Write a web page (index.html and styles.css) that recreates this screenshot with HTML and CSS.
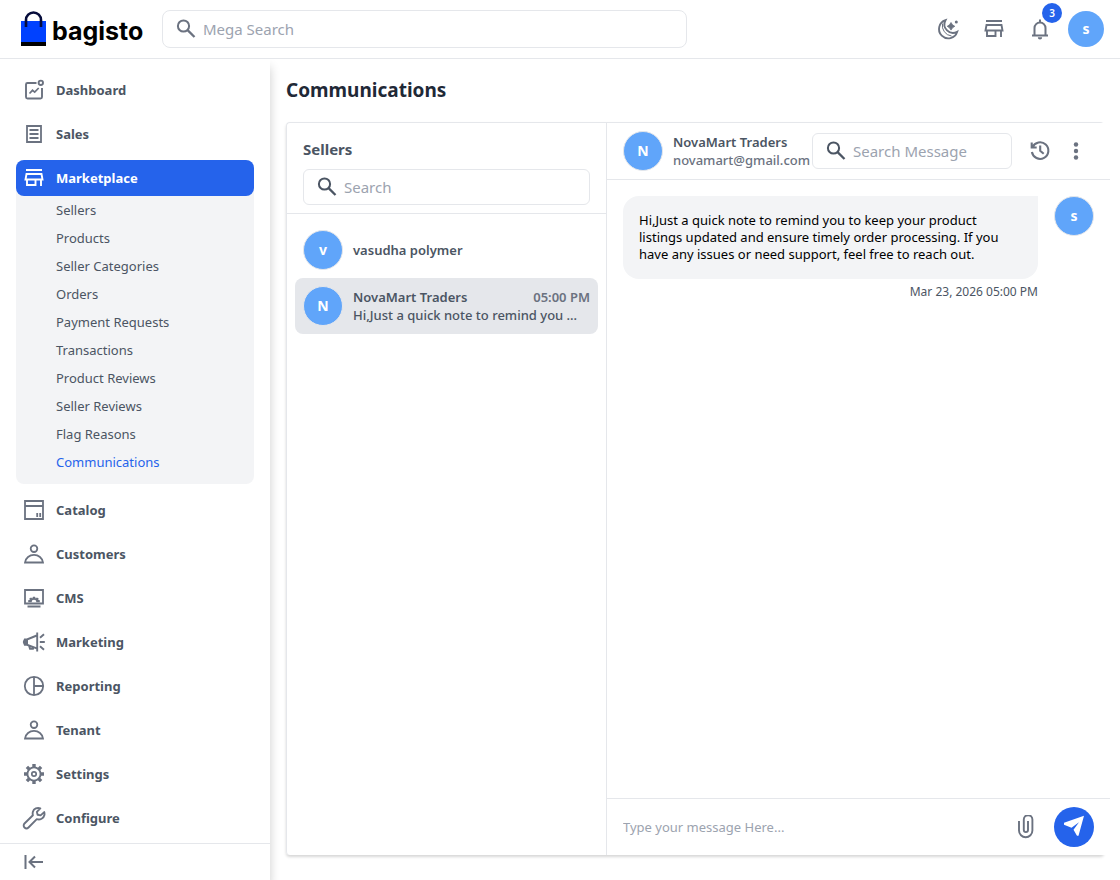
FILE: index.html
```html
<!DOCTYPE html>
<html lang="en">
<head>
<meta charset="utf-8">
<meta name="viewport" content="width=device-width, initial-scale=1">
<title>Communications</title>
<link rel="stylesheet" href="styles.css">
</head>
<body>
<svg class="sprite" aria-hidden="true">
  <symbol id="i-search" viewBox="0 0 24 24"><g fill="none" stroke="currentColor" stroke-width="2"><circle cx="9.500" cy="9" r="5.600"/><path d="M13.600 13.100 20.500 20" stroke-width="2.300"/></g></symbol>
  <symbol id="i-store" viewBox="0 0 24 24"><g fill="none" stroke="currentColor" stroke-width="1.900"><path d="M4 4h16M4.500 8h15l1 5.500h-17zM5 13.500V19h8.500v-5.500M19 13.500V20"/></g></symbol>
  <symbol id="i-person" viewBox="0 0 24 24"><g fill="none" stroke="currentColor" stroke-width="1.800"><circle cx="12" cy="6.700" r="3.300"/><path d="M3 20.500c.6-4.600 4.500-7.600 9-7.600s8.400 3 9 7.600z"/></g></symbol>
</svg>
<header class="topbar">
  <a class="logo" href="#" aria-label="bagisto">
    <svg width="26" height="36" viewBox="0 0 26 36" aria-hidden="true"><path fill="#0041ff" d="M1 10h25v21H1z"/><path fill="#000" d="M1 31h25v4H1z"/><path d="M6 16V9a7.500 7.500 0 0 1 15 0v7" fill="none" stroke="#060c3b" stroke-width="2.600"/></svg>
    <span class="logo-text">bagisto</span>
  </a>
  <label class="field mega"><svg class="icon"><use href="#i-search"/></svg><input type="text" placeholder="Mega Search" aria-label="Mega Search"></label>
  <div class="top-actions">
    <button aria-label="Dark mode"><svg class="icon" viewBox="0 0 24 24"><g fill="none" stroke="currentColor" stroke-width="1.900"><path d="M9.500 3.200A9.300 9.300 0 1 0 21.200 14.800 8.600 8.600 0 0 1 9.500 3.200z"/><path d="M6.500 6.500a10.500 10.500 0 0 0 9 12.500" stroke-width="1"/></g><path fill="currentColor" d="m15 5.500 1.500 2.300 2.300 1.500-2.300 1.500-1.500 2.300-1.500-2.300-2.300-1.500 2.300-1.500z" stroke="currentColor" stroke-width=".8"/><circle cx="20.300" cy="5" r="1.500" fill="currentColor"/></svg></button>
    <button aria-label="Visit shop"><svg class="icon"><use href="#i-store"/></svg></button>
    <button class="bell" aria-label="Notifications"><svg class="icon" viewBox="0 0 24 24"><path d="M6.500 18.200V11a5.500 5.500 0 0 1 11 0v7.200M4 18.500h16M12 2.500v3" fill="none" stroke="currentColor" stroke-width="2"/><path fill="currentColor" d="M9.800 20.200h4.400a2.200 2.200 0 0 1-4.400 0z"/></svg><span class="badge">3</span></button>
    <button class="avatar avatar-top">s</button>
  </div>
</header>
<div class="shell">
  <aside class="sidebar">
    <nav class="menu">
      <a class="item" href="#"><svg class="icon" viewBox="0 0 24 24"><g fill="none" stroke="currentColor" stroke-width="1.900"><path d="M14.500 5H5.500a1.500 1.500 0 0 0-1.500 1.500v12.500a1.500 1.500 0 0 0 1.500 1.500H18.500a1.500 1.500 0 0 0 1.500-1.500V10"/><path d="m7.500 15.500 3-3.200 2.200 1.900 4-4.200" stroke-width="1.700"/><circle cx="18.800" cy="4.800" r="2.200"/></g></svg>Dashboard</a>
      <a class="item" href="#"><svg class="icon" viewBox="0 0 24 24"><path d="M5 4h14v16H5zM7.500 8h9M7.500 12h9M7.500 16h9" fill="none" stroke="currentColor" stroke-width="1.800"/></svg>Sales</a>
      <div class="group">
        <a class="item active" href="#"><svg class="icon"><use href="#i-store"/></svg>Marketplace</a>
        <div class="submenu">
          <a href="#">Sellers</a><a href="#">Products</a><a href="#">Seller Categories</a><a href="#">Orders</a><a href="#">Payment Requests</a><a href="#">Transactions</a><a href="#">Product Reviews</a><a href="#">Seller Reviews</a><a href="#">Flag Reasons</a><a class="current" href="#">Communications</a>
        </div>
      </div>
      <a class="item" href="#"><svg class="icon" viewBox="0 0 24 24"><path d="M3 3h18v18H3zM3 8h18M15.200 15v4M18.200 15v4" fill="none" stroke="currentColor" stroke-width="1.800"/></svg>Catalog</a>
      <a class="item" href="#"><svg class="icon"><use href="#i-person"/></svg>Customers</a>
      <a class="item" href="#"><svg class="icon" viewBox="0 0 24 24"><path d="M3 4h18v13.500H3zM5.500 20.500h13" fill="none" stroke="currentColor" stroke-width="1.800"/><path fill="currentColor" d="M6.200 16.200v-2l1.600-.4-.4-1.500 1.800-.9 1 1 .8-1.700h2l.8 1.700 1-1 1.800.9-.4 1.500 1.600.4v2h-3.400a2.400 2.400 0 0 0-4.800 0z"/></svg>CMS</a>
      <a class="item" href="#"><svg class="icon" viewBox="0 0 24 24"><g fill="none" stroke="currentColor" stroke-width="1.900"><path d="M15.200 2.500v19M14.800 5.500 5 9.500H2.800L1.800 12l1 2.800H5l9.800 3.500M7 15.500l1 3.200h3l.6-1.800M17.800 12h5M18 7.800l4-3.500M18 16.200l4 3.500"/></g><path fill="currentColor" d="M2.500 9H6v6H2.500L1 12z"/></svg>Marketing</a>
      <a class="item" href="#"><svg class="icon" viewBox="0 0 24 24"><path d="M12 2.800a9.200 9.200 0 1 0 0 18.400 9.200 9.200 0 0 0 0-18.400zM12 3v18M12 12h9" fill="none" stroke="currentColor" stroke-width="1.800"/></svg>Reporting</a>
      <a class="item" href="#"><svg class="icon"><use href="#i-person"/></svg>Tenant</a>
      <a class="item" href="#"><svg class="icon" viewBox="0 0 24 24"><g fill="none" stroke="currentColor"><circle cx="12" cy="12" r="6.600" stroke-width="1.900"/><circle cx="12" cy="12" r="2.200" stroke-width="1.700"/><path stroke-width="3.400" d="M12 2v3.500M12 18.500V22M2 12h3.500M18.500 12H22M4.900 4.900l2.500 2.500M16.600 16.600l2.500 2.500M4.900 19.100l2.500-2.500M16.600 7.400l2.500-2.500"/></g></svg>Settings</a>
      <a class="item" href="#"><svg class="icon" viewBox="0 0 24 24"><path d="M18.300 2.400c-3-1.200-6.500.3-7.400 3.400-.4 1.300-.3 2.400 0 3.500L2.500 17.500a2.800 2.800 0 0 0 4 4L14.800 13.200c3.400 1 6.900-.8 7.600-4.200.2-1 .1-2-.2-2.900l-3.600 3.300-3-.6-.7-3z" fill="none" stroke="currentColor" stroke-width="1.900" stroke-linejoin="round"/></svg>Configure</a>
    </nav>
    <button class="collapse" aria-label="Collapse menu"><svg class="icon" viewBox="0 0 24 24"><path d="M3.500 5v14M21 12H8M13 6.500 7.500 12l5.500 5.500" fill="none" stroke="currentColor" stroke-width="2"/></svg></button>
  </aside>
  <main class="main">
    <h1>Communications</h1>
    <div class="panel">
      <section class="sellers">
        <div class="sellers-head">
          <h2>Sellers</h2>
          <label class="field dark"><svg class="icon"><use href="#i-search"/></svg><input type="text" placeholder="Search" aria-label="Search sellers"></label>
        </div>
        <div class="seller-list">
          <a class="seller" href="#"><span class="avatar">v</span><span class="seller-info"><span class="name">vasudha polymer</span></span></a>
          <a class="seller selected" href="#"><span class="avatar">N</span><span class="seller-info"><span class="row"><span class="name">NovaMart Traders</span><span class="time">05:00 PM</span></span><span class="preview">Hi,Just a quick note to remind you …</span></span></a>
        </div>
      </section>
      <section class="chat">
        <div class="chat-head">
          <span class="avatar">N</span>
          <div class="contact"><span class="name">NovaMart Traders</span><span class="email">novamart@gmail.com</span></div>
          <label class="field dark message-search"><svg class="icon"><use href="#i-search"/></svg><input type="text" placeholder="Search Message" aria-label="Search Message"></label>
          <div class="chat-tools">
            <button aria-label="History"><svg class="icon" viewBox="0 0 24 24"><path d="M3.700 3.500v5h5M4.500 8.200A8.300 8.300 0 1 1 3.900 13M12.200 6.500v5.300l3.500 3" fill="none" stroke="currentColor" stroke-width="2.100"/></svg></button>
            <button aria-label="More"><svg class="icon" viewBox="0 0 24 24" fill="currentColor"><circle cx="12" cy="5.500" r="2.200"/><circle cx="12" cy="12" r="2.200"/><circle cx="12" cy="18.500" r="2.200"/></svg></button>
          </div>
        </div>
        <div class="messages">
          <div class="message">
            <div class="message-body">
              <p class="bubble">Hi,Just a quick note to remind you to keep your product listings updated and ensure timely order processing. If you have any issues or need support, feel free to reach out.</p>
              <time>Mar 23, 2026 05:00 PM</time>
            </div>
            <span class="avatar">s</span>
          </div>
        </div>
        <form class="composer">
          <input type="text" placeholder="Type your message Here..." aria-label="Message">
          <button type="button" aria-label="Attach file"><svg class="icon" viewBox="0 0 24 24"><path d="M5 6v9.500a6.700 6.700 0 0 0 13.400 0V4.500a4.300 4.300 0 0 0-8.600 0V15a2.100 2.100 0 0 0 4.200 0V6" fill="none" stroke="currentColor" stroke-width="1.900"/></svg></button>
          <button type="button" class="send" aria-label="Send"><svg class="icon" viewBox="0 0 24 24"><path fill="currentColor" d="M22 .8 2 7.800v2l7.500 3L17 7.300l-5.500 7.500L15 20.800h1.500z"/></svg></button>
        </form>
      </section>
    </div>
  </main>
</div>
</body>
</html>
```

FILE: styles.css
```css
* { box-sizing: border-box; }
body {
  margin: 0;
  height: 100vh;
  display: flex;
  flex-direction: column;
  font: 13px/18px "Noto Sans", sans-serif;
  color: #4b5563;
  background: #fff;
}
h1, h2, p { margin: 0; }
a { color: inherit; text-decoration: none; }
button, input { font: inherit; color: inherit; border: 0; padding: 0; background: none; }
input { outline: 0; min-width: 0; }
input::placeholder { color: #9ca3af; opacity: 1; }
button { display: flex; cursor: pointer; }
.sprite { display: none; }
.icon { width: 24px; height: 24px; flex: none; display: block; color: #6b7280; }

.topbar { flex: none; height: 59px; display: flex; align-items: center; padding: 0 16px 0 20px; border-bottom: 1px solid #e5e7eb; }
.logo { width: 142px; display: flex; align-items: center; gap: 6px; color: #000; }
.logo-text { padding-top: 4px; font: 700 25px/30px Inter, sans-serif; }
.field { display: flex; align-items: center; gap: 5px; height: 36px; padding: 0 11px; border: 1px solid #e5e7eb; border-radius: 6px; background: #fff; }
.field input { flex: 1; width: 100%; font-size: 15px; line-height: 24px; }
.dark .icon { color: #4b5563; }
.mega { width: 525px; height: 38px; border-radius: 8px; }
.top-actions { margin-left: auto; display: flex; align-items: center; gap: 22px; }
.bell { position: relative; }
.badge { position: absolute; left: 14px; top: -14px; width: 20px; height: 20px; border-radius: 50%; background: #2563eb; color: #fff; font-size: 10px; line-height: 20px; font-weight: 600; text-align: center; }
.avatar { flex: none; width: 40px; height: 40px; display: flex; align-items: center; justify-content: center; border: 1px solid #e5e7eb; border-radius: 50%; background: #60a5fa; color: #fff; font-size: 14px; font-weight: 700; }
.avatar-top { width: 36px; height: 36px; border: 0; margin-left: -6px; }

.shell { flex: 1; min-height: 0; display: flex; }
.sidebar { flex: none; width: 270px; display: flex; flex-direction: column; box-shadow: 0 8px 10px rgba(0, 0, 0, .2); clip-path: inset(0 -12px 0 0); }
.menu { flex: 1; min-height: 0; overflow: hidden; display: flex; flex-direction: column; gap: 8px; padding: 13px 16px 0; }
.item { flex: none; display: flex; align-items: center; gap: 10px; height: 36px; padding: 0 6px; border-radius: 8px; font-weight: 700; }
.active { background: #2563eb; color: #fff; }
.active .icon { color: #fff; }
.group { flex: none; background: #f3f4f6; border-radius: 8px; }
.submenu { display: flex; flex-direction: column; padding: 0 0 8px 40px; }
.submenu a { line-height: 28px; }
.submenu .current { color: #2563eb; }
.collapse { flex: none; height: 37px; align-items: center; padding: 0 22px; border-top: 1px solid #e5e7eb; }

.main { flex: 1; min-width: 0; display: flex; flex-direction: column; gap: 17px; padding: 16px 16px 25px; }
h1 { font-size: 19px; line-height: 30px; font-weight: 700; color: #1f2937; }
.panel { flex: 1; min-height: 0; display: flex; border: 1px solid #e5e7eb; border-right: 0; border-bottom: 0; border-radius: 4px; box-shadow: 0 2px 3px rgba(0, 0, 0, .16); }
.sellers { flex: none; width: 320px; border-right: 1px solid #e5e7eb; }
.sellers-head { display: flex; flex-direction: column; gap: 8px; padding: 14px 16px 8px; border-bottom: 1px solid #e5e7eb; }
h2 { font-size: 15px; line-height: 24px; font-weight: 700; }
.seller-list { padding: 8px; }
.seller { display: flex; align-items: center; gap: 10px; height: 56px; padding: 8px; border-radius: 8px; }
.selected { background: #e5e7eb; }
.seller-info, .contact { flex: 1; min-width: 0; display: flex; flex-direction: column; }
.row { display: flex; justify-content: space-between; }
.name { font-weight: 600; }
.time { font-weight: 600; color: #6b7280; }
.preview { font-weight: 500; white-space: nowrap; }

.chat { flex: 1; min-width: 0; margin-right: -6px; display: flex; flex-direction: column; background: #fff; }
.chat-head { flex: none; height: 57px; display: flex; align-items: center; padding: 0 22px 0 16px; border-bottom: 1px solid #e5e7eb; }
.contact { margin-left: 10px; }
.email { color: #6b7280; font-weight: 500; }
.message-search { flex: none; width: 200px; }
.chat-tools { display: flex; gap: 12px; padding-left: 16px; }
.messages { flex: 1; min-height: 0; padding: 16px 16px 0; }
.message { display: flex; justify-content: flex-end; gap: 16px; }
.message-body { display: flex; flex-direction: column; align-items: flex-end; max-width: 415px; }
.bubble { padding: 16px; border-radius: 16px 0 16px 16px; background: #f3f4f6; color: #000; line-height: 17px; }
time { margin-top: 4px; font-size: 12px; line-height: 18px; }
.composer { flex: none; height: 57px; display: flex; align-items: center; padding: 0 16px; gap: 16px; border-top: 1px solid #e5e7eb; }
.composer input { flex: 1; }
.send { width: 40px; height: 40px; align-items: center; justify-content: center; border-radius: 50%; background: #2563eb; }
.send .icon { color: #fff; }
```
